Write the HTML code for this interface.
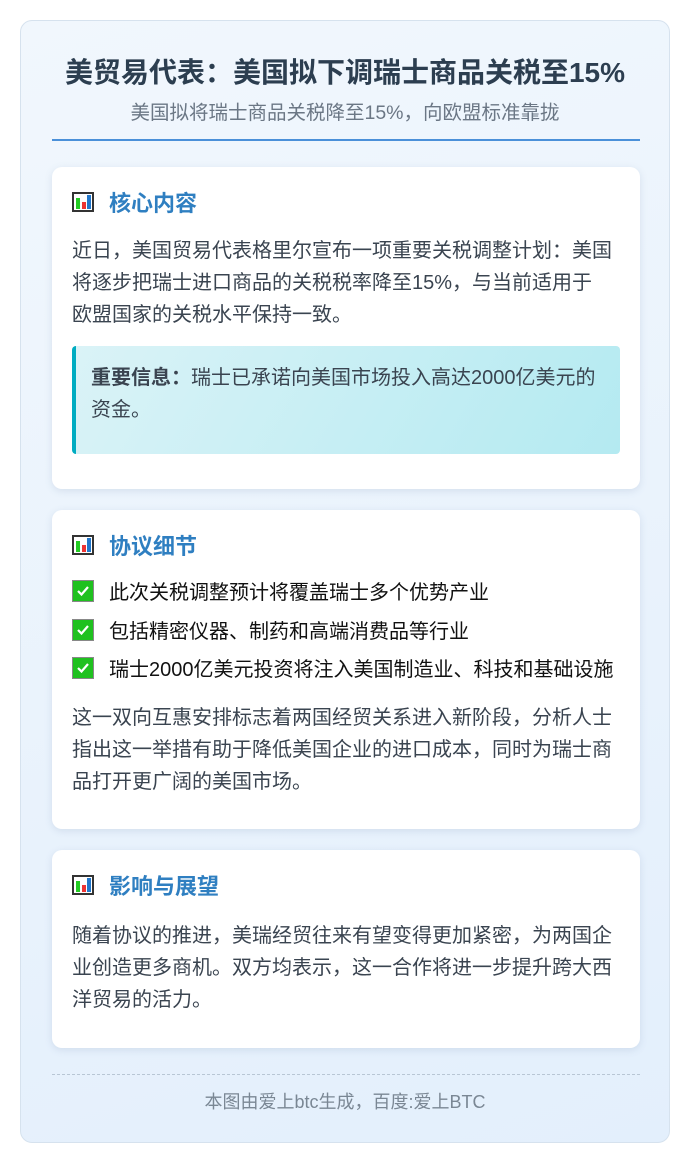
<!DOCTYPE html>
<html><head><meta charset="utf-8"><style>
*{margin:0;padding:0;box-sizing:border-box}
body{width:691px;height:1164px;background:#fff;font-family:"Liberation Sans","Noto Sans CJK SC",sans-serif;color:#3a4450;position:relative;overflow:hidden}
.wrap{position:absolute;left:20px;top:20px;width:650px;height:1123px;border:1px solid #d6e2ee;border-radius:12px;background:linear-gradient(160deg,#f1f7fd,#e3effc)}
h1{position:absolute;left:0;width:100%;top:30px;text-align:center;font-size:28px;font-weight:bold;color:#2c3e50;white-space:nowrap}
.sub{position:absolute;left:0;width:100%;top:75px;text-align:center;font-size:19.5px;color:#6b7785}
.rule{position:absolute;left:31px;width:588px;top:118px;height:2px;background:#4a90d9}
.card{position:absolute;left:31px;width:588px;background:#fff;border-radius:10px;box-shadow:0 2px 8px rgba(80,110,150,.15);padding:0 20px}
.hd{position:absolute;left:20px;font-size:22px;font-weight:bold;color:#2f7fc1;display:flex;align-items:center}
.ic{width:22px;height:20px;border:2px solid #333;background:#fff;margin-right:15px;position:relative}
.ic i{position:absolute;bottom:1px;width:4px}
p{position:absolute;left:20px;right:20px;font-size:20px;line-height:32px;color:#3a4450}
.hl{position:absolute;left:20px;right:20px;border-left:4px solid #00acc1;border-radius:4px;background:linear-gradient(120deg,#daf3f7,#b4eaf1)}
.li{position:absolute;left:20px;font-size:20px;color:#111;display:flex;align-items:center;white-space:nowrap}
.ck{width:22px;height:22px;background:#1fc11f;border:1px solid #888;margin-right:15px;display:flex;align-items:center;justify-content:center}
.foot{position:absolute;left:31px;width:588px;top:1053px;border-top:1px dashed #b8c6d4}
.ft{position:absolute;left:0;width:100%;top:1067px;text-align:center;font-size:18px;color:#7a8794}
</style></head><body>
<div class="wrap">
<h1>美贸易代表：美国拟下调瑞士商品关税至15%</h1>
<div class="sub">美国拟将瑞士商品关税降至15%，向欧盟标准靠拢</div>
<div class="rule"></div>

<div class="card" style="top:146px;height:322px">
<div class="hd" style="top:19px"><span class="ic"><i style="left:2px;height:11px;background:#2c2"></i><i style="left:8px;height:7px;background:#e33"></i><i style="left:13px;height:14px;background:#27c"></i></span>核心内容</div>
<p style="top:68px">近日，美国贸易代表格里尔宣布一项重要关税调整计划：美国将逐步把瑞士进口商品的关税税率降至15%，与当前适用于<br>欧盟国家的关税水平保持一致。</p>
<div class="hl" style="top:179px;height:108px"><p style="left:15px;top:16px;right:20px"><b>重要信息：</b>瑞士已承诺向美国市场投入高达2000亿美元的资金。</p></div>
</div>

<div class="card" style="top:489px;height:319px">
<div class="hd" style="top:19px"><span class="ic"><i style="left:2px;height:11px;background:#2c2"></i><i style="left:8px;height:7px;background:#e33"></i><i style="left:13px;height:14px;background:#27c"></i></span>协议细节</div>
<div class="li" style="top:66px"><span class="ck"><svg width="14" height="12" viewBox="0 0 14 12"><path d="M2 6l3.5 3.5L12 2" stroke="#fff" stroke-width="2.2" fill="none"/></svg></span>此次关税调整预计将覆盖瑞士多个优势产业</div>
<div class="li" style="top:105px"><span class="ck"><svg width="14" height="12" viewBox="0 0 14 12"><path d="M2 6l3.5 3.5L12 2" stroke="#fff" stroke-width="2.2" fill="none"/></svg></span>包括精密仪器、制药和高端消费品等行业</div>
<div class="li" style="top:143px"><span class="ck"><svg width="14" height="12" viewBox="0 0 14 12"><path d="M2 6l3.5 3.5L12 2" stroke="#fff" stroke-width="2.2" fill="none"/></svg></span>瑞士2000亿美元投资将注入美国制造业、科技和基础设施</div>
<p style="top:192px">这一双向互惠安排标志着两国经贸关系进入新阶段，分析人士指出这一举措有助于降低美国企业的进口成本，同时为瑞士商品打开更广阔的美国市场。</p>
</div>

<div class="card" style="top:829px;height:198px">
<div class="hd" style="top:19px"><span class="ic"><i style="left:2px;height:11px;background:#2c2"></i><i style="left:8px;height:7px;background:#e33"></i><i style="left:13px;height:14px;background:#27c"></i></span>影响与展望</div>
<p style="top:70px">随着协议的推进，美瑞经贸往来有望变得更加紧密，为两国企业创造更多商机。双方均表示，这一合作将进一步提升跨大西洋贸易的活力。</p>
</div>

<div class="foot"></div>
<div class="ft">本图由爱上btc生成，百度:爱上BTC</div>
</div>
</body></html>
